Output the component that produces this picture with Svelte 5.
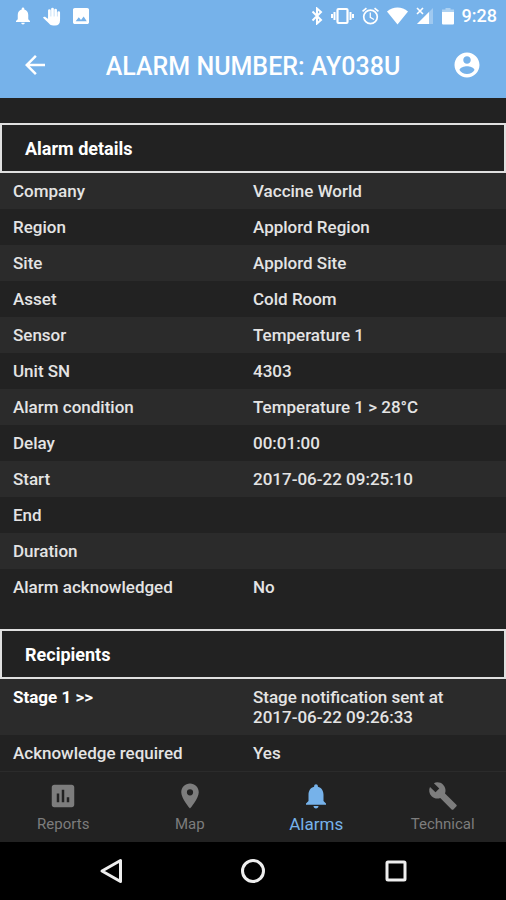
<script lang="ts">
  let details = [
    { label: "Company", value: "Vaccine World" },
    { label: "Region", value: "Applord Region" },
    { label: "Site", value: "Applord Site" },
    { label: "Asset", value: "Cold Room" },
    { label: "Sensor", value: "Temperature 1" },
    { label: "Unit SN", value: "4303" },
    { label: "Alarm condition", value: "Temperature 1 > 28°C" },
    { label: "Delay", value: "00:01:00" },
    { label: "Start", value: "2017-06-22 09:25:10" },
    { label: "End", value: "" },
    { label: "Duration", value: "" },
    { label: "Alarm acknowledged", value: "No" },
  ]
  let recipients = [
    { label: "Stage 1 >>", value: "Stage notification sent at 2017-06-22 09:26:33", stage: true },
    { label: "Acknowledge required", value: "Yes", stage: false },
  ]
  const bell = "M12 22c1.1 0 2-.9 2-2h-4c0 1.1.9 2 2 2zm6-6v-5c0-3.07-1.64-5.64-4.5-6.32V4c0-.83-.67-1.5-1.5-1.5s-1.5.67-1.5 1.5v.68C7.63 5.36 6 7.92 6 11v5l-2 2v1h16v-1l-2-2z"
  let tabs = [
    { name: "Reports", icon: "M19 3H5c-1.1 0-2 .9-2 2v14c0 1.1.9 2 2 2h14c1.1 0 2-.9 2-2V5c0-1.1-.9-2-2-2zM9 17H7v-7h2v7zm4 0h-2V7h2v10zm4 0h-2v-4h2v4z" },
    { name: "Map", icon: "M12 2C8.13 2 5 5.13 5 9c0 5.25 7 13 7 13s7-7.75 7-13c0-3.87-3.13-7-7-7zm0 9.5a2.5 2.5 0 0 1 0-5 2.5 2.5 0 0 1 0 5z" },
    { name: "Alarms", icon: bell },
    { name: "Technical", icon: "M22.7 19l-9.1-9.1c.9-2.3.4-5-1.5-6.9-2-2-5-2.4-7.4-1.3L9 6 6 9 1.6 4.7C.4 7.1.9 10.1 2.9 12.1c1.9 1.9 4.6 2.4 6.9 1.5l9.1 9.1c.4.4 1 .4 1.4 0l2.3-2.3c.5-.4.5-1.1.1-1.4z" },
  ]
  let current = "Alarms"
</script>

<div class="screen">
  <header>
    <div class="status">
      <svg width="14" height="18" viewBox="4 2.5 16 19.5" fill="#fff"><path d={bell} /></svg>
      <svg width="19" height="19" viewBox="0 0 19 19" fill="none" stroke="#fff" stroke-linecap="round">
        <path d="M7.4 11V3.6M10.5 10V2M13.6 10.5V3M16.7 12V5.5" stroke-width="2.7" />
        <path d="M6.2 9.5h11.8v4c0 3.300-1.800 5-4.800 5h-2c-2 0-3.200-.7-4.400-2.200L1 10.700c.5-1 1.700-1.200 2.700-.5l2.500 1.900z" fill="#fff" stroke="none" />
      </svg>
      <svg width="16" height="16" viewBox="3 3 18 18" fill="#fff"><path d="M21 19V5c0-1.100-.9-2-2-2H5c-1.100 0-2 .9-2 2v14c0 1.100.9 2 2 2h14c1.100 0 2-.9 2-2zM6 18l3.500-4.500 2.500 3 3-4 3.500 5.500z" /></svg>
      <span class="space"></span>
      <div class="system">
        <svg width="12" height="18" viewBox="0 0 12 18" fill="none" stroke="#fff" stroke-width="2">
          <path d="M1.500 4.500l8.500 8.500-4 3.500V1.500L10 5l-8.500 8.500" />
        </svg>
        <svg width="23" height="18" viewBox="0 0 23 18" fill="none" stroke="#fff" stroke-width="2.200">
          <rect x="6.500" y="2" width="10" height="14" rx="1" />
          <path d="M3.500 5v8M1 7v4M19.500 5v8M22 7v4" stroke-width="2" />
        </svg>
        <svg width="17" height="18" viewBox="2 2 20 20" fill="#fff"><path d="M22 5.720l-4.600-3.860-1.290 1.530 4.600 3.860L22 5.720zM7.880 3.390L6.600 1.860 2 5.710l1.290 1.530 4.590-3.850zM12.500 8H11v6l4.750 2.850.75-1.230-4-2.370V8zM12 4a9 9 0 1 0 0 18 9 9 0 0 0 0-18zm0 16a7 7 0 1 1 0-14 7 7 0 0 1 0 14z" /></svg>
        <svg width="21" height="18" viewBox="0 0 21 18" fill="#fff"><path d="M0 4.500C6-.7 15-.7 21 4.500L10.500 17.500z" /></svg>
        <svg width="18" height="18" viewBox="0 0 18 18" fill="#fff">
          <path d="M17 1v16H1z" opacity=".3" />
          <path d="M13 5v12H1z" />
          <path d="M1 1l6 6M7 1L1 7" stroke="#fff" stroke-width="1.600" />
        </svg>
        <svg width="12" height="18" viewBox="0 0 12 18" fill="#fff">
          <path d="M3.500 1h5v1.500H12V6H0V2.500h3.500z" opacity=".4" />
          <path d="M0 5h12v11.500a1 1 0 0 1-1 1H1a1 1 0 0 1-1-1z" />
        </svg>
        <time>9:28</time>
      </div>
    </div>
    <div class="titlebar">
      <button aria-label="Back">
        <svg width="30" height="30" viewBox="0 0 24 24" fill="#fff"><path d="M20 11H7.830l5.590-5.590L12 4l-8 8 8 8 1.410-1.410L7.830 13H20v-2z" /></svg>
      </button>
      <h1>ALARM NUMBER: AY038U</h1>
      <button aria-label="Account">
        <svg width="30" height="30" viewBox="0 0 24 24" fill="#fff"><path d="M12 2C6.480 2 2 6.480 2 12s4.480 10 10 10 10-4.480 10-10S17.520 2 12 2zm0 3c1.660 0 3 1.340 3 3s-1.340 3-3 3-3-1.340-3-3 1.340-3 3-3zm0 14.200c-2.500 0-4.710-1.280-6-3.220.03-1.990 4-3.080 6-3.080 1.990 0 5.970 1.090 6 3.080-1.290 1.940-3.500 3.220-6 3.220z" /></svg>
      </button>
    </div>
  </header>

  <main>
    <section>
      <h2>Alarm details</h2>
      <table>
        <tbody>
          {#each details as row}
            <tr>
              <th scope="row">{row.label}</th>
              <td>{row.value}</td>
            </tr>
          {/each}
        </tbody>
      </table>
    </section>
    <section>
      <h2>Recipients</h2>
      <table>
        <tbody>
          {#each recipients as row}
            <tr>
              <th scope="row" class:stage={row.stage}>{row.label}</th>
              <td>{row.value}</td>
            </tr>
          {/each}
        </tbody>
      </table>
    </section>
  </main>

  <nav class="tabs">
    {#each tabs as tab}
      <button class:active={tab.name === current} on:click={() => (current = tab.name)}>
        <svg width="30" height="30" viewBox="0 0 24 24" fill="currentColor"><path d={tab.icon} /></svg>
        <span>{tab.name}</span>
      </button>
    {/each}
  </nav>

  <div class="android">
    <button aria-label="System back">
      <svg width="26" height="26" viewBox="0 0 26 26"><path d="M22.500 2.500v21L4 13z" /></svg>
    </button>
    <button aria-label="Home">
      <svg width="26" height="26" viewBox="0 0 26 26"><circle cx="13" cy="13" r="10.500" /></svg>
    </button>
    <button aria-label="Recent apps">
      <svg width="26" height="26" viewBox="0 0 26 26"><rect x="5" y="4" width="18" height="18" rx="1" /></svg>
    </button>
  </div>
</div>

<style>
:global(body) {
  margin: 0;
  background: #222;
}

.screen {
  display: flex;
  flex-direction: column;
  height: 100vh;
  background: #222;
  color: #e4e4e4;
  font-family: Roboto, sans-serif;
  font-size: 17px;
  line-height: 20px;
}

svg {
  display: block;
  flex: none;
}

button {
  padding: 0;
  border: none;
  background: none;
  color: inherit;
  font: inherit;
  cursor: pointer;
}

header {
  background: #76b2ea;
  color: #fff;
}

.status {
  display: flex;
  align-items: center;
  gap: 12px;
  height: 32px;
  padding: 0 9px 0 16px;
}

.space {
  flex: 1;
}

.system {
  display: flex;
  align-items: center;
  gap: 8px;
}

time {
  font-size: 18px;
  font-weight: 500;
}

.titlebar {
  display: flex;
  align-items: center;
  justify-content: space-between;
  height: 66px;
  padding: 0 20px;
}

.titlebar button {
  width: 34px;
}

h1 {
  margin: 0;
  padding-top: 4px;
  font-size: 25px;
  font-weight: 500;
  line-height: 32px;
}

main {
  flex: 1;
  min-height: 0;
  overflow-y: auto;
  scrollbar-width: none;
}

section {
  padding-top: 24px;
}

section:first-child {
  padding-top: 25px;
}

h2 {
  box-sizing: border-box;
  height: 50px;
  margin: 0;
  padding: 14px 23px 12px;
  border: 2px solid #e0e0e0;
  color: #fff;
  font-size: 18px;
  font-weight: 700;
  line-height: 20px;
}

table {
  width: 100%;
  border-collapse: collapse;
  table-layout: fixed;
}

tr:nth-child(odd) {
  background: #2b2b2b;
}

th,
td {
  height: 20px;
  padding: 8px 13px;
  font-weight: 500;
  text-align: left;
  vertical-align: top;
}

td {
  padding: 8px 48px 8px 0;
}

th.stage {
  color: #fff;
  font-weight: 700;
}

.tabs {
  display: grid;
  grid-template-columns: repeat(4, 1fr);
  height: 70px;
  border-top: 1px solid #2b2b2b;
}

.tabs button {
  display: flex;
  flex-direction: column;
  align-items: center;
  justify-content: center;
  gap: 3px;
  color: #7d7d7d;
  font-size: 15px;
}

.tabs .active {
  color: #76b2ea;
  font-size: 17px;
}

.android {
  display: grid;
  grid-template-columns: repeat(3, 1fr);
  height: 58px;
  padding: 0 40px;
  background: #000;
}

.android svg {
  margin: 0 auto;
  fill: none;
  stroke: #eee;
  stroke-width: 3;
  stroke-linejoin: round;
}
</style>
